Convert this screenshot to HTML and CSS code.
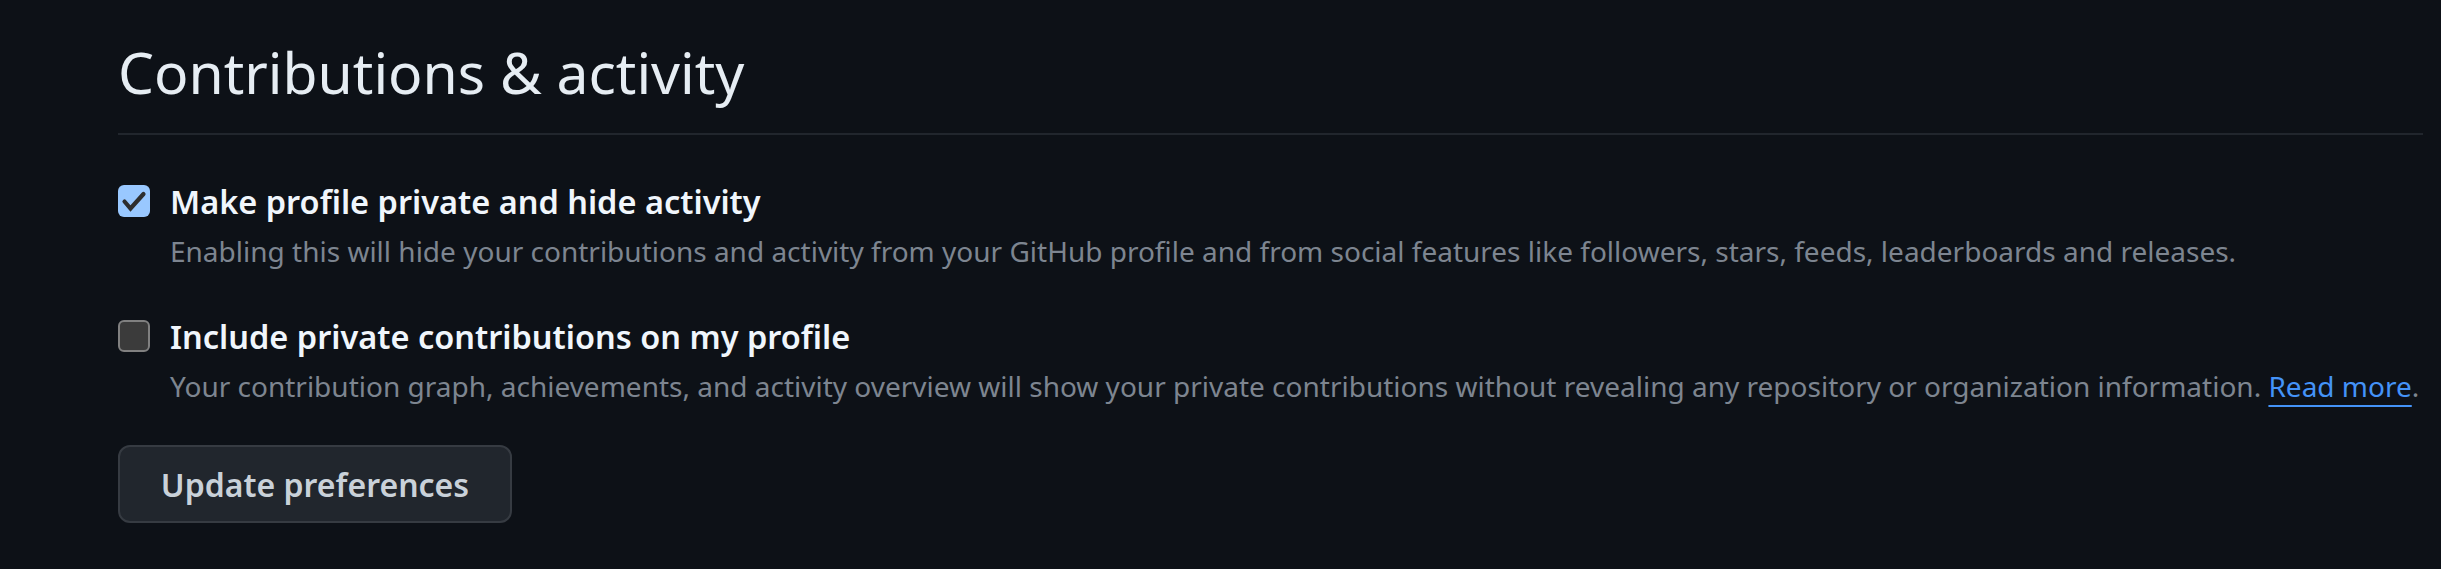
FILE: index.html
```html
<!DOCTYPE html>
<html lang="en">
<head>
<meta charset="utf-8">
<title>Contributions &amp; activity</title>
<link rel="stylesheet" href="styles.css">
</head>
<body>
<div class="page">
  <h2 class="subhead">Contributions &amp; activity</h2>
  <form class="prefs">
    <div class="option">
      <span class="checkbox checked">
        <svg viewBox="0 0 32 32" width="32" height="32" aria-hidden="true"><path d="M6.5 16.5l6 7 13-14.5" fill="none" stroke="#2e2e2e" stroke-width="4.2" stroke-linecap="round" stroke-linejoin="miter"/></svg>
      </span>
      <div class="option-text">
        <div class="option-title">Make profile private and hide activity</div>
        <p class="note">Enabling this will hide your contributions and activity from your GitHub profile and from social features like followers, stars, feeds, leaderboards and releases.</p>
      </div>
    </div>
    <div class="option">
      <span class="checkbox"></span>
      <div class="option-text">
        <div class="option-title">Include private contributions on my profile</div>
        <p class="note">Your contribution graph, achievements, and activity overview will show your private contributions without revealing any repository or organization information. <a href="#" class="link">Read more</a>.</p>
      </div>
    </div>
    <button type="button" class="btn">Update preferences</button>
  </form>
</div>
</body>
</html>
```

FILE: styles.css
```css
html, body {
  margin: 0;
  padding: 0;
  background: #0d1117;
}
body {
  font-family: "Noto Sans", "Open Sans", sans-serif;
  color: #e6edf3;
}
.page {
  padding: 0 18px 0 118px;
}
.subhead {
  margin: 0;
  padding-top: 32px;
  padding-bottom: 21px;
  font-size: 57px;
  line-height: 80px;
  font-weight: 400;
  color: #e6edf3;
  border-bottom: 2px solid #21262d;
}
.prefs {
  padding-top: 47px;
}
.option {
  display: flex;
  gap: 20px;
  align-items: flex-start;
}
.option + .option {
  margin-top: 46px;
}
.checkbox {
  flex: none;
  box-sizing: border-box;
  width: 32px;
  height: 32px;
  margin-top: 3px;
  border-radius: 6px;
  border: 2px solid #808080;
  background: #3b3b3b;
  display: flex;
  align-items: center;
  justify-content: center;
}
.checkbox.checked {
  background: #99c8ff;
  border: none;
}
.option-title {
  font-size: 32.5px;
  line-height: 40px;
  font-weight: 600;
  color: #f0f6fc;
}
.note {
  margin: 9px 0 0;
  font-size: 28px;
  line-height: 40px;
  color: #7d8590;
}
.link {
  color: #4493f8;
  text-decoration: underline;
  text-decoration-thickness: 2px;
  text-underline-offset: 8px;
}
.btn {
  display: flex;
  align-items: center;
  justify-content: center;
  margin-top: 39px;
  box-sizing: border-box;
  width: 394px;
  height: 78px;
  border: 2px solid #363b42;
  border-radius: 12px;
  background: #21262d;
  color: #c9d1d9;
  font-family: "Noto Sans", "Open Sans", sans-serif;
  font-size: 32px;
  font-weight: 600;
  padding: 0;
}
```
